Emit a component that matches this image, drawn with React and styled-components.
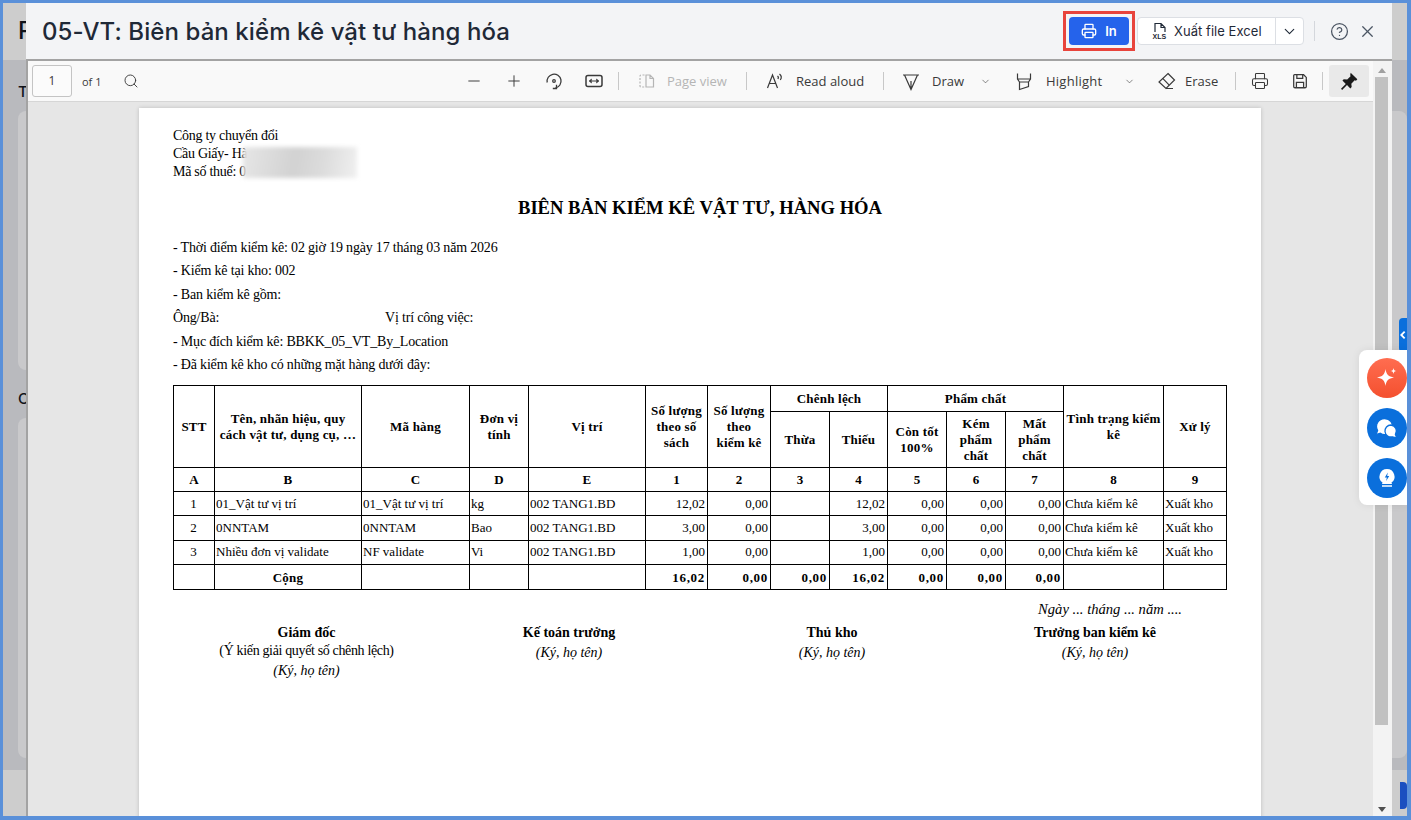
import React from "react";
import styled, { createGlobalStyle } from "styled-components";
import { ChevronDown, CircleHelp, Minus, Plus, Printer, Search, X } from "lucide-react";

const GlobalStyle = createGlobalStyle`
  html, body { margin: 0; padding: 0; height: 100%; overflow: hidden; }
  #root { height: 100%; }
  * { box-sizing: border-box; }
`;

const COLS = [41, 147, 108, 59, 117, 62, 63, 59, 58, 59, 59, 58, 100, 63];
const ROWS = [
  { stt: "1", name: "01_Vật tư vị trí", code: "01_Vật tư vị trí", unit: "kg", qty: "12,02" },
  { stt: "2", name: "0NNTAM", code: "0NNTAM", unit: "Bao", qty: "3,00" },
  { stt: "3", name: "Nhiều đơn vị validate", code: "NF validate", unit: "Vi", qty: "1,00" },
];
const LETTERS = ["A", "B", "C", "D", "E", "1", "2", "3", "4", "5", "6", "7", "8", "9"];
const SIGNERS = [
  { width: 267, title: "Giám đốc", note: "(Ý kiến giải quyết số chênh lệch)" },
  { width: 258, title: "Kế toán trưởng" },
  { width: 268, title: "Thủ kho" },
  { width: 258, title: "Trưởng ban kiểm kê" },
];

const Stroke = ({ size = 20, width = 1.2, children }) => (
  <svg width={size} height={size} viewBox="0 0 20 20" fill="none" stroke="currentColor" strokeWidth={width}>
    {children}
  </svg>
);

export default function App() {
  return (
    <Frame>
      <GlobalStyle />
      <BackPage>
        <BackHeader><BackLetter>P</BackLetter></BackHeader>
        <BackBody>
          <BackLetter $small>T</BackLetter>
          <BackCard $height={259} />
          <BackLetter $small>C</BackLetter>
          <BackCard $height={340} />
        </BackBody>
        <BackFooter><BackSave /></BackFooter>
      </BackPage>

      <Modal>
        <ModalHeader>
          <ModalTitle>05-VT: Biên bản kiểm kê vật tư hàng hóa</ModalTitle>
          <HeaderActions>
            <PrintHighlight>
              <PrintButton><Printer size={16} strokeWidth={2} />In</PrintButton>
            </PrintHighlight>
            <ExcelButton>
              <ExcelLabel>
                <svg width="18" height="20" viewBox="0 0 18 20" fill="none" stroke="#1f2937" strokeWidth="1.2">
                  <path d="M4 11V2.5h6l4 4V11M10 2.5v4h4" />
                  <text x="1.5" y="18" fontSize="7" fontWeight="700" fill="#1f2937" stroke="none" fontFamily="Liberation Sans, sans-serif">XLS</text>
                </svg>
                Xuất file Excel
              </ExcelLabel>
              <ExcelArrow><ChevronDown size={17} strokeWidth={1.6} /></ExcelArrow>
            </ExcelButton>
            <HeaderDivider />
            <HeaderIcon><CircleHelp size={19} strokeWidth={1.6} /></HeaderIcon>
            <HeaderIcon><X size={19} strokeWidth={1.6} /></HeaderIcon>
          </HeaderActions>
        </ModalHeader>

        <Viewer>
          <Toolbar>
            <PageBox>1</PageBox>
            <PageCount>of 1</PageCount>
            <SearchIcon><Search size={16} strokeWidth={1.4} /></SearchIcon>
            <ToolGroup>
              <Tool $w={40} $center><Minus size={18} strokeWidth={1.3} /></Tool>
              <Tool $w={40} $center><Plus size={18} strokeWidth={1.3} /></Tool>
              <Tool $w={40} $center>
                <Stroke width={1.3}>
                  <path d="M3.2 11.5A7 7 0 1 1 11.5 17" />
                  <path d="M12.5 13.8v3.7H8.8" />
                  <circle cx="10" cy="10" r="1.3" />
                </Stroke>
              </Tool>
              <Tool $w={44} $pad={10}>
                <Stroke width={1.5}>
                  <rect x="2" y="4.5" width="16" height="11" rx="2" />
                  <path d="M5 10l2.5-2v4zM15 10l-2.500-2v4z" fill="currentColor" strokeWidth="0.6" />
                  <path d="M8 10h4" strokeWidth="1" />
                </Stroke>
              </Tool>
              <ToolDivider />
              <Tool $w={127} $pad={18} $gap={10} $disabled>
                <Stroke>
                  <path d="M7.5 4H4a1 1 0 0 0-1 1v10a1 1 0 0 0 1 1h3.500" strokeDasharray="2 1.5" />
                  <path d="M9 4h4l3.5 3.5V16H9zM13 4v3.5h3.5" />
                </Stroke>
                Page view
              </Tool>
              <ToolDivider />
              <Tool $w={136} $pad={18} $gap={11}>
                <Stroke>
                  <path d="M2.5 17L7.500 4l5 13M4.300 12.500h6.400" />
                  <path d="M12.500 5c1 .7 1 2 .4 3M14.500 3c2 1.600 2 4.200.8 6" />
                </Stroke>
                Read aloud
              </Tool>
              <ToolDivider />
              <Tool $w={130} $pad={17} $gap={11}>
                <Stroke>
                  <path d="M2 4h16M3.500 4L10 18.500 16.500 4M10 18.500V10" />
                </Stroke>
                Draw
                <ToolChevron $left={5}><ChevronDown size={11} strokeWidth={1.3} /></ToolChevron>
              </Tool>
              <Tool $w={142} $gap={12}>
                <Stroke>
                  <path d="M3.500 2.500V8l2 3h9l2-3V2.500M3.500 8h13M5.500 11v7.500l9-3V11" />
                </Stroke>
                <HighlightLabel>Highlight</HighlightLabel>
                <ToolChevron $left={10}><ChevronDown size={11} strokeWidth={1.3} /></ToolChevron>
              </Tool>
              <Tool $w={79} $gap={9}>
                <Stroke>
                  <path d="M12 2.500L18.500 9 10 17.500 3 11z" />
                  <path d="M6.700 7.300l6.300 6.500M10 17.500h7" />
                </Stroke>
                Erase
              </Tool>
              <ToolDivider />
              <Tool $w={44} $pad={15}><Printer size={18} strokeWidth={1.4} /></Tool>
              <Tool $w={42} $pad={11}>
                <Stroke size={18} width={1.4}>
                  <path d="M4 3h10l3 3v10a1.500 1.500 0 0 1-1.500 1.500h-11A1.500 1.500 0 0 1 3 16V4a1 1 0 0 1 1-1z" />
                  <path d="M6.500 3v4h6.500V3M6 17.500V11.500h8v6" />
                </Stroke>
              </Tool>
              <ToolDivider />
              <PinTool>
                <svg width="20" height="20" viewBox="0 0 18 18" fill="#1a1a1a">
                  <path d="M10.500 1.500l6 6-1.200 1.200-1.200-.3-3 3 .3 3.100-1.200 1.200-3-3-4.400 4.300-1-1 4.300-4.400-3-3 1.200-1.200 3.100.3 3-3-.3-1.200z" />
                </svg>
              </PinTool>
            </ToolGroup>
          </Toolbar>

          <Pane>
            <Sheet>
              <Company>
                <div>Công ty chuyển đổi</div>
                <div>Cầu Giấy- Hà</div>
                <div>Mã số thuế: 0</div>
                <Blur />
              </Company>
              <DocTitle>BIÊN BẢN KIỂM KÊ VẬT TƯ, HÀNG HÓA</DocTitle>
              <InfoList>
                <InfoLine>- Thời điểm kiểm kê: 02 giờ 19 ngày 17 tháng 03 năm 2026</InfoLine>
                <InfoLine>- Kiểm kê tại kho: 002</InfoLine>
                <InfoLine>- Ban kiểm kê gồm:</InfoLine>
                <InfoLine><InfoLabel>Ông/Bà:</InfoLabel>Vị trí công việc:</InfoLine>
                <InfoLine>- Mục đích kiểm kê: BBKK_05_VT_By_Location</InfoLine>
                <InfoLine>- Đã kiểm kê kho có những mặt hàng dưới đây:</InfoLine>
              </InfoList>

              <Table>
                <colgroup>
                  {COLS.map((w, i) => <col key={i} style={{ width: w }} />)}
                </colgroup>
                <thead>
                  <tr style={{ height: 26 }}>
                    <Th rowSpan={2}>STT</Th>
                    <Th rowSpan={2}>Tên, nhãn hiệu, quy cách vật tư, dụng cụ, …</Th>
                    <Th rowSpan={2}>Mã hàng</Th>
                    <Th rowSpan={2}>Đơn vị tính</Th>
                    <Th rowSpan={2}>Vị trí</Th>
                    <Th rowSpan={2}>Số lượng theo số sách</Th>
                    <Th rowSpan={2}>Số lượng<br />theo<br />kiểm kê</Th>
                    <Th colSpan={2}>Chênh lệch</Th>
                    <Th colSpan={3}>Phẩm chất</Th>
                    <Th rowSpan={2}>Tình trạng kiểm kê</Th>
                    <Th rowSpan={2}>Xử lý</Th>
                  </tr>
                  <tr style={{ height: 56 }}>
                    <Th>Thừa</Th>
                    <Th>Thiếu</Th>
                    <Th>Còn tốt 100%</Th>
                    <Th>Kém phẩm chất</Th>
                    <Th>Mất phẩm chất</Th>
                  </tr>
                  <tr style={{ height: 24 }}>
                    {LETTERS.map((l) => <Th key={l}>{l}</Th>)}
                  </tr>
                </thead>
                <tbody>
                  {ROWS.map((r) => (
                    <tr key={r.stt} style={{ height: 24.4 }}>
                      <Td $align="center">{r.stt}</Td>
                      <Td>{r.name}</Td>
                      <Td>{r.code}</Td>
                      <Td>{r.unit}</Td>
                      <Td>002 TANG1.BD</Td>
                      <Td $align="right">{r.qty}</Td>
                      <Td $align="right">0,00</Td>
                      <Td />
                      <Td $align="right">{r.qty}</Td>
                      <Td $align="right">0,00</Td>
                      <Td $align="right">0,00</Td>
                      <Td $align="right">0,00</Td>
                      <Td>Chưa kiểm kê</Td>
                      <Td>Xuất kho</Td>
                    </tr>
                  ))}
                  <tr style={{ height: 25 }}>
                    <Td />
                    <Th>Cộng</Th>
                    <Td /><Td /><Td />
                    <TotalCell>16,02</TotalCell>
                    <TotalCell>0,00</TotalCell>
                    <TotalCell>0,00</TotalCell>
                    <TotalCell>16,02</TotalCell>
                    <TotalCell>0,00</TotalCell>
                    <TotalCell>0,00</TotalCell>
                    <TotalCell>0,00</TotalCell>
                    <Td /><Td />
                  </tr>
                </tbody>
              </Table>

              <DateLine>Ngày ... tháng ... năm ....</DateLine>
              <Signers>
                {SIGNERS.map((s) => (
                  <Signer key={s.title} $width={s.width}>
                    <SignerTitle>{s.title}</SignerTitle>
                    {s.note && <SignerNote>{s.note}</SignerNote>}
                    <SignerHint>(Ký, họ tên)</SignerHint>
                  </Signer>
                ))}
              </Signers>
            </Sheet>
          </Pane>

          <Scrollbar>
            <ScrollArrow $dir="up" />
            <ScrollThumb />
            <ScrollArrow $dir="down" />
          </Scrollbar>
        </Viewer>
      </Modal>

      <SideTab>
        <svg width="8" height="10" viewBox="0 0 8 10" fill="#fff"><path d="M5 1L1 5l4 4 1.300-1.300L3.600 5l2.700-2.700z" /></svg>
      </SideTab>
      <FloatPanel>
        <RoundButton $bg="linear-gradient(180deg,#ff6d50,#f4502f)">
          <svg width="28" height="28" viewBox="0 0 28 28" fill="#fff">
            <path d="M12.500 5c.9 5.600 2.900 7.600 8.500 8.500-5.600.9-7.600 2.900-8.500 8.500-.9-5.600-2.900-7.600-8.500-8.500 5.600-.9 7.600-2.900 8.500-8.500z" />
            <path d="M20.500 4c.3 2 1 2.700 3 3-2 .3-2.700 1-3 3-.3-2-1-2.700-3-3 2-.3 2.700-1 3-3z" />
          </svg>
        </RoundButton>
        <RoundButton $bg="#0a6fdc">
          <svg width="30" height="30" viewBox="0 0 30 30" fill="#fff" stroke="#0a6fdc" strokeWidth="1.3">
            <path d="M12.500 5.500a8 8 0 0 0-6.900 12L4 21.500l4.300-1.300a8 8 0 1 0 4.200-14.700z" />
            <path d="M19 12a6 6 0 1 0 1.500 11.800l4.200 1-1.300-3.500A6 6 0 0 0 19 12z" />
          </svg>
        </RoundButton>
        <RoundButton $bg="#0a6fdc">
          <svg width="30" height="30" viewBox="0 0 30 30" fill="none">
            <path d="M15 6a7.500 7.500 0 0 0-4.500 13.500L10 21h10l-.5-1.500A7.500 7.500 0 0 0 15 6z" fill="#fff" />
            <path d="M10 23h10" stroke="#fff" strokeWidth="1.5" />
            <path d="M15.800 9.500l-3 5h2l-.6 3.500 3-5h-2z" fill="#0a6fdc" />
          </svg>
        </RoundButton>
      </FloatPanel>
    </Frame>
  );
}

const Frame = styled.div`
  position: relative;
  width: 1411px;
  height: 820px;
  overflow: hidden;
  border: solid #5a90d9;
  border-width: 3px 4px 4px 3px;
  background: #b9babe;
`;

const BackPage = styled.div`
  display: flex;
  flex-direction: column;
  height: 100%;
  color: #10131a;
  font-family: "Inter", sans-serif;
`;

const BackHeader = styled.div`
  height: 57px;
  padding: 14px 0 0 15px;
  background: #cdcdcd;
`;

const BackLetter = styled.div`
  font-size: ${(p) => (p.$small ? 15 : 24)}px;
  font-weight: 500;
  line-height: ${(p) => (p.$small ? 18 : 28)}px;
`;

const BackBody = styled.div`
  flex: 1;
  padding: 23px 0 0 15px;
  overflow: hidden;
`;

const BackCard = styled.div`
  height: ${(p) => p.$height}px;
  margin: 10px 0 20px;
  border-radius: 8px;
  background: #c9c9cb;
`;

const BackFooter = styled.div`
  display: flex;
  justify-content: flex-end;
  height: 46px;
  padding-top: 12px;
  background: #cdcdcd;
`;

const BackSave = styled.div`
  width: 7px;
  height: 27px;
  border-radius: 0 4px 4px 0;
  background: #1b4fc0;
`;

const Modal = styled.div`
  position: absolute;
  top: 0;
  left: 23px;
  bottom: 0;
  width: 1366px;
  display: flex;
  flex-direction: column;
  background: #f3f4f6;
`;

const ModalHeader = styled.div`
  display: flex;
  align-items: center;
  justify-content: space-between;
  height: 56px;
  padding: 0 6px 0 16px;
`;

const ModalTitle = styled.h1`
  margin: 1px 0 0;
  font: 500 24px/32px "Inter", sans-serif;
  letter-spacing: 0.08px;
  color: #1f2937;
`;

const HeaderActions = styled.div`
  display: flex;
  align-items: center;
`;

const PrintHighlight = styled.div`
  padding: 3px;
  margin-right: 2px;
  border: 3px solid #e8443c;
`;

const PrintButton = styled.button`
  display: flex;
  align-items: center;
  justify-content: center;
  gap: 8px;
  width: 60px;
  height: 28px;
  border: 0;
  border-radius: 4px;
  background: #2563eb;
  color: #fff;
  font: 600 13px "Inter", sans-serif;
`;

const ExcelButton = styled.div`
  display: flex;
  align-items: stretch;
  width: 167px;
  height: 28px;
  border: 1px solid #dcdfe4;
  border-radius: 4px;
  background: #fff;
  color: #1f2937;
  font: 400 13px "Inter", sans-serif;
  letter-spacing: 0.05px;
`;

const ExcelLabel = styled.div`
  flex: 1;
  display: flex;
  align-items: center;
  gap: 5px;
  padding-left: 13px;
`;

const ExcelArrow = styled.div`
  display: flex;
  align-items: center;
  justify-content: center;
  width: 28px;
  border-left: 1px solid #dcdfe4;
`;

const HeaderDivider = styled.div`
  width: 1px;
  height: 20px;
  margin: 0 15px 0 10px;
  background: #d4d7dc;
`;

const HeaderIcon = styled.div`
  display: flex;
  width: 28px;
  color: #4b5563;
`;

const Viewer = styled.div`
  flex: 1;
  position: relative;
  display: flex;
  flex-direction: column;
  min-height: 0;
  border: solid #a3a3a3;
  border-width: 2px 0 0 2px;
`;

const Toolbar = styled.div`
  display: flex;
  align-items: center;
  flex: none;
  height: 41px;
  padding: 0 0 0 4px;
  background: #f9f9f9;
  border-bottom: 1px solid #d6d6d6;
  color: #3a3a3a;
  font: 400 13px "Open Sans", sans-serif;
`;

const PageBox = styled.div`
  width: 40px;
  height: 32px;
  border: 1px solid #c4c4c4;
  border-radius: 3px;
  background: #fbfbfb;
  text-align: center;
  font-size: 12px;
  line-height: 30px;
`;

const PageCount = styled.span`
  margin-left: 10px;
  font-size: 11px;
`;

const SearchIcon = styled.div`
  display: flex;
  margin-left: 22px;
`;

const ToolGroup = styled.div`
  display: flex;
  align-items: center;
  margin-left: auto;
  margin-right: 23px;
`;

const Tool = styled.div`
  display: flex;
  align-items: center;
  justify-content: ${(p) => (p.$center ? "center" : "flex-start")};
  gap: ${(p) => p.$gap || 0}px;
  width: ${(p) => p.$w}px;
  padding-left: ${(p) => p.$pad || 0}px;
  white-space: nowrap;
  color: ${(p) => (p.$disabled ? "#b5b5b5" : "inherit")};
`;

const HighlightLabel = styled.span`
  letter-spacing: 0.25px;
`;

const ToolChevron = styled.span`
  display: flex;
  margin-left: ${(p) => p.$left}px;
`;

const ToolDivider = styled.div`
  flex: none;
  width: 1px;
  height: 18px;
  background: #c8c8c8;
`;

const PinTool = styled.div`
  display: flex;
  align-items: center;
  justify-content: center;
  width: 40px;
  height: 32px;
  margin-left: 6px;
  border-radius: 3px;
  background: #e9e9e9;
`;

const Pane = styled.div`
  flex: 1;
  min-height: 0;
  padding: 6px 0 0 111px;
  overflow: hidden;
  background: #e6e6e6;
`;

const Sheet = styled.div`
  width: 1122px;
  height: 900px;
  padding: 19px 34px;
  background: #fff;
  box-shadow: 0 0 4px rgba(0, 0, 0, 0.18);
  color: #000;
  font: 400 14px/18px "Liberation Serif", serif;
`;

const Company = styled.div`
  position: relative;
  width: 300px;
  letter-spacing: -0.28px;
  line-height: 18px;
`;

const Blur = styled.div`
  position: absolute;
  left: 70px;
  top: 20px;
  width: 114px;
  height: 31px;
  background: linear-gradient(100deg, #e6e6e6, #d2d2d2 45%, #dcdcdc 70%, #f0f0f0);
  filter: blur(2px);
`;

const DocTitle = styled.h2`
  margin: 15px 0 19px;
  text-align: center;
  font: 700 18.6px/24px "Liberation Serif", serif;
`;

const InfoList = styled.div`
  display: flex;
  flex-direction: column;
  gap: 5.4px;
  letter-spacing: -0.18px;
`;

const InfoLine = styled.div`
  line-height: 18px;
`;

const InfoLabel = styled.span`
  display: inline-block;
  width: 212px;
`;

const Table = styled.table`
  width: 1053px;
  margin-top: 11px;
  border-collapse: collapse;
  table-layout: fixed;
  font-size: 13px;
  line-height: 14px;
`;

const Th = styled.th`
  padding: 1px 2px 0;
  border: 1px solid #000;
  font-weight: 700;
  font-size: 13px;
  letter-spacing: 0.2px;
  line-height: 16px;
  text-align: center;
`;

const TotalCell = styled(Th)`
  letter-spacing: 0.7px;
  text-align: right;
`;

const Td = styled.td`
  padding: 0 2px 0 1px;
  border: 1px solid #000;
  white-space: nowrap;
  text-align: ${(p) => p.$align || "left"};
`;

const DateLine = styled.div`
  margin-top: 10px;
  padding-right: 45px;
  text-align: right;
  font-style: italic;
  font-size: 14.6px;
`;

const Signers = styled.div`
  display: flex;
  margin-top: 6px;
  font-size: 14px;
`;

const Signer = styled.div`
  width: ${(p) => p.$width}px;
  text-align: center;
`;

const SignerTitle = styled.div`
  font-weight: 700;
  line-height: 18px;
`;

const SignerNote = styled.div`
  letter-spacing: -0.35px;
  line-height: 18px;
`;

const SignerHint = styled.div`
  margin-top: 2px;
  font-style: italic;
  line-height: 18px;
`;

const Scrollbar = styled.div`
  position: absolute;
  top: 0;
  right: 0;
  bottom: 0;
  width: 19px;
  display: flex;
  flex-direction: column;
  padding-left: 2px;
  background: #f3f3f3;
`;

const ScrollThumb = styled.div`
  flex: none;
  width: 13px;
  height: 648px;
  margin-top: 4px;
  background: #c1c1c1;
`;

const ScrollArrow = styled.div`
  flex: none;
  width: 0;
  height: 0;
  margin: ${(p) => (p.$dir === "up" ? "7px 0 0 3px" : "82px 0 0 3px")};
  border-left: 4px solid transparent;
  border-right: 4px solid transparent;
  ${(p) => (p.$dir === "up" ? "border-bottom: 5px solid #a0a0a0;" : "border-top: 5px solid #505050;")}
`;

const SideTab = styled.div`
  position: absolute;
  top: 315px;
  right: 0;
  display: flex;
  align-items: center;
  justify-content: center;
  width: 8px;
  height: 34px;
  border-radius: 4px 0 0 4px;
  background: #0a6fdc;
  overflow: hidden;
`;

const FloatPanel = styled.div`
  position: absolute;
  top: 347px;
  right: 0;
  display: flex;
  flex-direction: column;
  gap: 10px;
  width: 48px;
  height: 155px;
  padding: 8px 0 0 8px;
  border-radius: 8px 0 0 8px;
  background: #fff;
  box-shadow: 0 0 8px rgba(0, 0, 0, 0.08);
`;

const RoundButton = styled.div`
  display: flex;
  align-items: center;
  justify-content: center;
  width: 40px;
  height: 40px;
  border-radius: 50%;
  background: ${(p) => p.$bg};
`;
